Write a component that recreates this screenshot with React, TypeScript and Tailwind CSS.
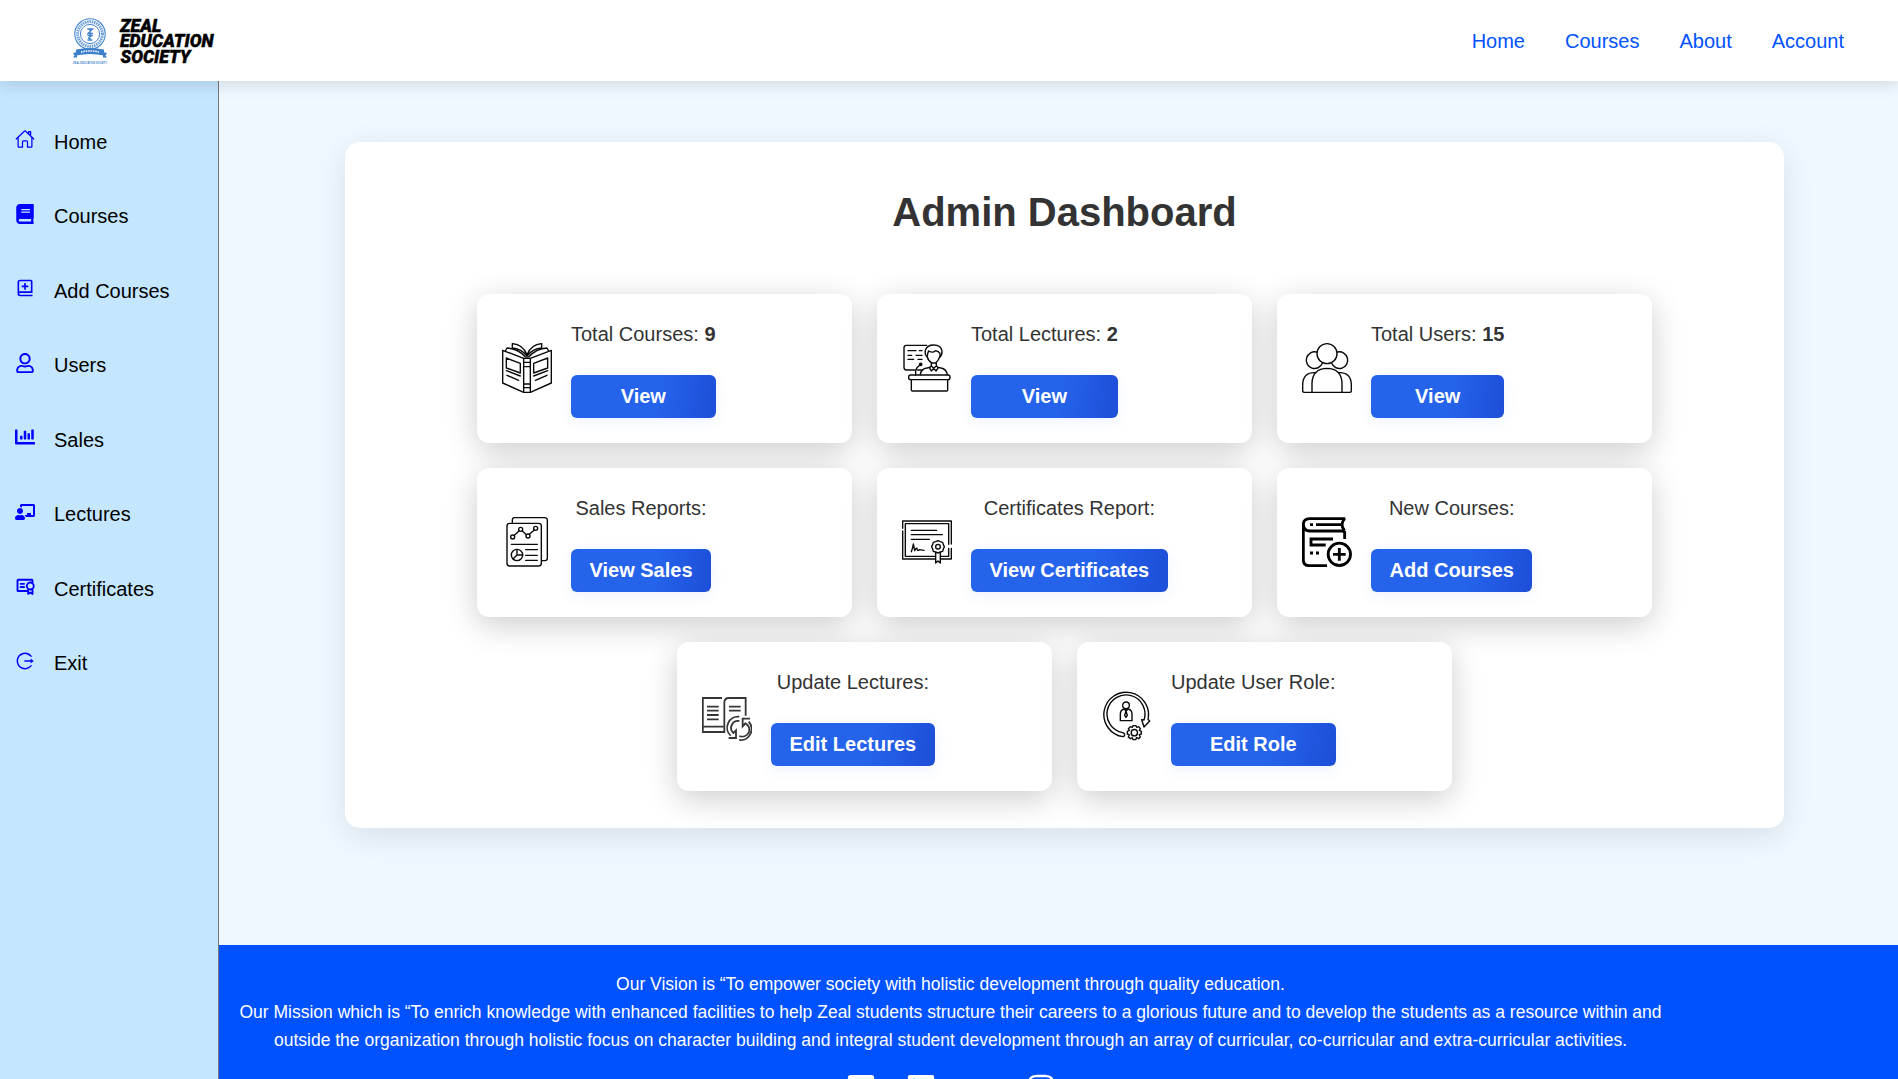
import React from "react";
import { IoHomeOutline } from "react-icons/io5";
import {
  FaBook,
  FaRegUser,
  FaChartBar,
  FaChalkboardTeacher,
  FaFacebookSquare,
  FaLinkedin,
  FaYoutube,
  FaInstagram,
} from "react-icons/fa";
import { BiBookAdd } from "react-icons/bi";
import { AiOutlineLogout } from "react-icons/ai";
import { PiCertificateBold } from "react-icons/pi";

const ink = { fill: "none", stroke: "#0a0a0a", strokeWidth: 4.2, strokeLinecap: "round", strokeLinejoin: "round" } as const;

function Icon({ children }: { children: React.ReactNode }) {
  return (
    <svg viewBox="0 0 150 150" className="mb-px h-[50px] w-[50px] shrink-0" {...ink}>
      {children}
    </svg>
  );
}

function OpenBook() {
  return (
    <Icon>
      <path d="M2 22 L65 46 V148 L2 120 Z M148 22 L85 46 V148 L148 120 Z" />
      <path d="M65 46 H85 M65 58 H85 M65 71 H85 M65 123 H85 M65 134 H85 M65 148 H85" />
      <path d="M10 24 L15 15 Q48 17 70 42 M140 24 L135 15 Q102 17 80 42" />
      <path d="M31 17 V2 Q62 4 75 35 Q88 4 119 2 V17 M31 15 Q58 17 75 39 Q92 17 119 15 M75 35 V46" />
      <path d="M13 45 L55 61 V90 L13 75 Z M137 45 L95 61 V90 L137 75 Z" />
      <path d="M13 83 L55 99 M15 97 L50 112 M137 83 L95 99 M135 97 L100 112" />
    </Icon>
  );
}

function Lecturer() {
  return (
    <Icon>
      <path d="M74 7 H13 Q6 7 6 14 V73 Q6 81 13 81 H38 M47 81 H62" />
      <path d="M18 23 H42 M52 23 H60 M18 37 H29 M42 37 H60 M18 49 H35 M48 49 H60" />
      <path d="M76 42 Q68 36 70 22 Q75 6 95 6 Q117 6 120 24 Q121 36 114 42" />
      <path d="M76 42 Q76 30 80 24 Q93 31 100 23 Q110 25 114 31 V40 Q110 52 101 60 H90 Q78 53 76 42 Z" />
      <path d="M88 60 V69 L95 76 L103 69 V60 M88 69 L82 74 L88 84 L95 76 L102 84 L109 74 L103 69" />
      <path d="M55 95 Q57 77 75 75 L83 73 M108 73 L117 75 Q133 78 136 95" />
      <path d="M41 96 V84 Q42 74 54 66" />
      <circle cx="56" cy="64" r="3.5" fill="#111" />
      <rect x="20" y="96" width="124" height="14" rx="6" />
      <path d="M28 110 V141 Q28 144 31 144 H134 Q137 144 137 141 V110" />
    </Icon>
  );
}

function Group() {
  return (
    <Icon>
      <circle cx="75" cy="32" r="30" />
      <path d="M43 27 A25 25 0 1 0 61 61 M107 27 A25 25 0 1 1 89 61" />
      <path d="M30 148 V120 Q32 77 75 76 Q118 77 120 120 V148 M40 89 Q4 87 2 124 V143 Q2 148 7 148 H143 Q148 148 148 143 V124 Q146 87 110 89" />
    </Icon>
  );
}

function Report() {
  return (
    <Icon>
      <rect x="15" y="19" width="103" height="128" rx="8" />
      <path d="M31 16 V9 Q31 2 38 2 H129 Q136 2 136 9 V124 Q136 131 129 131 H121" />
      <circle cx="32" cy="60" r="6" />
      <circle cx="56" cy="37" r="6" />
      <circle cx="78" cy="57" r="6" />
      <circle cx="101" cy="34" r="6" />
      <path d="M37 55 L51 42 M61 42 L73 53 M82 52 L97 39 M28 82 H106" />
      <circle cx="45" cy="114" r="17" />
      <path d="M45 97 V114 L33 126 M45 114 H62 M71 98 H106 M71 115 H106 M71 130 H106" />
    </Icon>
  );
}

function Certificate() {
  return (
    <Icon>
      <path d="M2 34 V12 H148 V81 M148 94 V126 H117 M99 126 H2 V42" />
      <path d="M10 44 V20 H140 V82 M140 94 V118 H117 M99 118 H10 V42" />
      <path d="M28 40 H104 M28 53 H121 M28 67 H82" />
      <path d="M28 104 Q32 94 34 81 L38 101 Q42 92 45 94 Q46 104 52 98 L66 100" />
      <path d="M108 71 L115 74 L122 76 L124 83 L127 89 L124 96 L122 103 L115 105 L108 108 L101 105 L94 103 L92 96 L89 89 L92 83 L94 76 L101 74 Z" />
      <circle cx="108" cy="89" r="7" />
      <path d="M101 107 V138 L108 132 L115 138 V107" />
    </Icon>
  );
}

function NewCourse() {
  return (
    <svg viewBox="0 0 150 150" className="mb-px h-[50px] w-[50px] shrink-0" fill="none" stroke="#000" strokeWidth="8.500">
      <path d="M130 5 H22 Q4 6 4 23 V130 Q5 146 22 146 H75" />
      <path d="M4 23 Q6 41 23 42 H122 L128 46 V66 M128 5 Q112 23 128 41" />
      <path d="M42 23 H117 M24 23 H33" />
      <path d="M93 66 H27 V84 H71 M24 108 H33 M42 108 H51" />
      <circle cx="112" cy="112" r="33.500" />
      <path d="M112 93 V131 M93 112 H131" />
    </svg>
  );
}

function UpdateLecture() {
  return (
    <svg
      viewBox="0 0 150 150"
      className="mb-px h-[50px] w-[50px] shrink-0"
      fill="none"
      stroke="#363636"
      strokeWidth="5.400"
    >
      <path d="M60 21 H2.500 V123 H67 V34 Q68 21 80 21 H131 V74 M2.500 107 H64" />
      <path d="M15 47 H50 M15 59 H50 M15 72 H50 M15 85 H50 M81 47 H116 M81 59 H116" />
      <path d="M112 77 A33 33 0 0 0 86 134 M112 90 A21 21 0 0 0 94 126 L102 118 V141 H80" />
      <path d="M112 147 A33 33 0 0 0 140 92 M112 135 A21 21 0 0 0 130 97 L122 106 V83 H144" />
    </svg>
  );
}

function UserRole() {
  return (
    <Icon>
      <path d="M63 137 A67 67 0 1 1 138 85 L143 90 L126 108 L119 86 L126 87 A57 57 0 1 0 62 125 Q70 128 67 134 Q66 137 63 137" />
      <circle cx="72" cy="43" r="10" />
      <path d="M55 89 V70 Q55 55 68 54 H77 Q90 55 90 70 V89 Z M68 55 L72 61 L77 55 M72 61 L68 73 L72 79 L76 73 Z" />
      <path d="M93 104 H102 L104 109 L110 107 L115 113 L112 118 L118 121 V129 L112 131 L115 138 L110 143 L104 140 L101 146 H93 L91 140 L85 143 L79 138 L82 132 L76 129 V121 L82 118 L79 113 L85 107 L91 109 Z" />
      <circle cx="97" cy="125" r="9.500" />
    </Icon>
  );
}

function Logo() {
  return (
    <svg width="150" height="60" viewBox="0 0 150 60" className="shrink-0">
      <g fill="none" stroke="#4585cf">
        <circle cx="20" cy="23" r="15.200" strokeWidth="1.100" />
        <circle cx="20" cy="23" r="12.400" strokeWidth="3" strokeDasharray="1.500 0.800" opacity="0.8" />
        <circle cx="20" cy="23" r="9.600" strokeWidth="1" />
        <path d="M17.200 18 H22.500 L18 22.500 H23 M17.500 24.500 H22.800 M18 27.500 L22 24.500 M20 17 V29.500 M17.500 29 H22.500" strokeWidth="1.400" />
      </g>
      <path d="M6 38.500 Q20 35.500 34 38.500 V44.500 Q20 41.500 6 44.500 Z" fill="#3f80cc" />
      <path d="M3 42 L7 41 V46.500 H3 L4.500 44.500 Z M37 42 L33 41 V46.500 H37 L35.500 44.500 Z" fill="#3f80cc" />
      <path d="M11 41 Q20 39 29 41" stroke="#fff" strokeWidth="1.500" strokeDasharray="1.500 0.900" fill="none" />
      <text x="3" y="52.500" fontFamily="Liberation Sans" fontSize="4" fontWeight="700" fill="#4585cf" textLength="34" lengthAdjust="spacingAndGlyphs">
        ZEAL EDUCATION SOCIETY
      </text>
      <g fontFamily="Roboto" fontWeight="900" fontStyle="italic" fontSize="17.500" fill="#000" stroke="#000" strokeWidth="0.400">
        <text x="50" y="20.500" textLength="41.500" lengthAdjust="spacingAndGlyphs">ZEAL</text>
        <text x="50" y="36" textLength="93.500" lengthAdjust="spacingAndGlyphs">EDUCATION</text>
        <text x="50.500" y="51.500" textLength="70" lengthAdjust="spacingAndGlyphs">SOCIETY</text>
      </g>
    </svg>
  );
}

const navLinks = ["Home", "Courses", "About", "Account"];

const sidebarLinks = [
  { icon: IoHomeOutline, label: "Home" },
  { icon: FaBook, label: "Courses" },
  { icon: BiBookAdd, label: "Add Courses" },
  { icon: FaRegUser, label: "Users" },
  { icon: FaChartBar, label: "Sales" },
  { icon: FaChalkboardTeacher, label: "Lectures" },
  { icon: PiCertificateBold, label: "Certificates" },
  { icon: AiOutlineLogout, label: "Exit" },
];

const cards = [
  { icon: OpenBook, label: "Total Courses:", value: "9", action: "View" },
  { icon: Lecturer, label: "Total Lectures:", value: "2", action: "View" },
  { icon: Group, label: "Total Users:", value: "15", action: "View" },
  { icon: Report, label: "Sales Reports:", action: "View Sales" },
  { icon: Certificate, label: "Certificates Report:", action: "View Certificates" },
  { icon: NewCourse, label: "New Courses:", action: "Add Courses" },
  { icon: UpdateLecture, label: "Update Lectures:", action: "Edit Lectures" },
  { icon: UserRole, label: "Update User Role:", action: "Edit Role" },
];

const socials = [
  { icon: FaFacebookSquare, offset: "" },
  { icon: FaLinkedin, offset: "" },
  { icon: FaYoutube, offset: "mt-px" },
  { icon: FaInstagram, offset: "" },
];

export default function App() {
  return (
    <div className="flex h-screen flex-col overflow-hidden bg-[#f0f8ff] font-['Liberation_Sans',Arial,sans-serif] text-xl">
      <header className="z-10 flex h-[81px] shrink-0 items-center justify-between bg-white pr-[54px] pl-[70px] shadow-[0_4px_15px_rgba(0,0,0,0.12)]">
        <Logo />
        <nav className="flex gap-10 text-[#0052ff]">
          {navLinks.map((l) => (
            <a key={l}>{l}</a>
          ))}
        </nav>
      </header>

      <div className="flex min-h-0 flex-1">
        <aside className="w-[219px] shrink-0 border-r border-[#777] bg-[#c4e6ff] pt-[23.500px]">
          {sidebarLinks.map(({ icon: I, label }) => (
            <a key={label} className="flex h-[74.500px] items-center gap-[19px] pl-[15px] text-black">
              <I className="mb-[5px] h-5 w-5 shrink-0 text-[#0000ff]" />
              {label}
            </a>
          ))}
        </aside>

        <div className="flex min-w-0 flex-1 flex-col">
          <main className="h-[864px] shrink-0 pt-[61px] pl-[126px]">
            <section className="h-[686px] w-[1439px] rounded-[15px] bg-white pt-10 shadow-[0_8px_32px_rgba(0,0,0,0.1)]">
              <h1 className="text-center text-[40px] leading-[60px] font-bold text-[#333]">Admin Dashboard</h1>
              <div className="mt-[52px] flex flex-wrap justify-center gap-[25px] px-[130px]">
                {cards.map(({ icon: I, label, value, action }) => (
                  <div
                    key={label}
                    className="flex h-[149px] w-[375px] items-center gap-[19px] rounded-xl bg-white px-[25px] shadow-[0_8px_32px_rgba(0,0,0,0.2)]"
                  >
                    <I />
                    <div className="flex flex-col text-center">
                      <p className="mb-[25px] leading-[31px] text-[#333]">
                        {label} {value && <b>{value}</b>}
                      </p>
                      <button className="h-[43px] rounded-md bg-[linear-gradient(100deg,#2563eb_60%,#1d4ed8_100%)] px-[18.500px] pb-0.5 font-bold text-white shadow-[0_4px_14px_rgba(37,99,235,0.08)]">
                        {action}
                      </button>
                    </div>
                  </div>
                ))}
              </div>
            </section>
          </main>

          <footer className="flex-1 bg-[#0052ff] pt-[25px] text-white">
            <div className="w-[1463px] text-center text-[17.500px] leading-7">
              <p>Our Vision is “To empower society with holistic development through quality education.</p>
              <p className="whitespace-nowrap">
                Our Mission which is “To enrich knowledge with enhanced facilities to help Zeal students structure their
                careers to a glorious future and to develop the students as a resource within and
              </p>
              <p>
                outside the organization through holistic focus on character building and integral student development
                through an array of curricular, co-curricular and extra-curricular activities.
              </p>
              <div className="mt-[19px] flex justify-center gap-[30px]">
                {socials.map(({ icon: S, offset }, i) => (
                  <S key={i} className={"h-[30px] w-[30px] " + offset} />
                ))}
              </div>
            </div>
          </footer>
        </div>
      </div>
    </div>
  );
}
